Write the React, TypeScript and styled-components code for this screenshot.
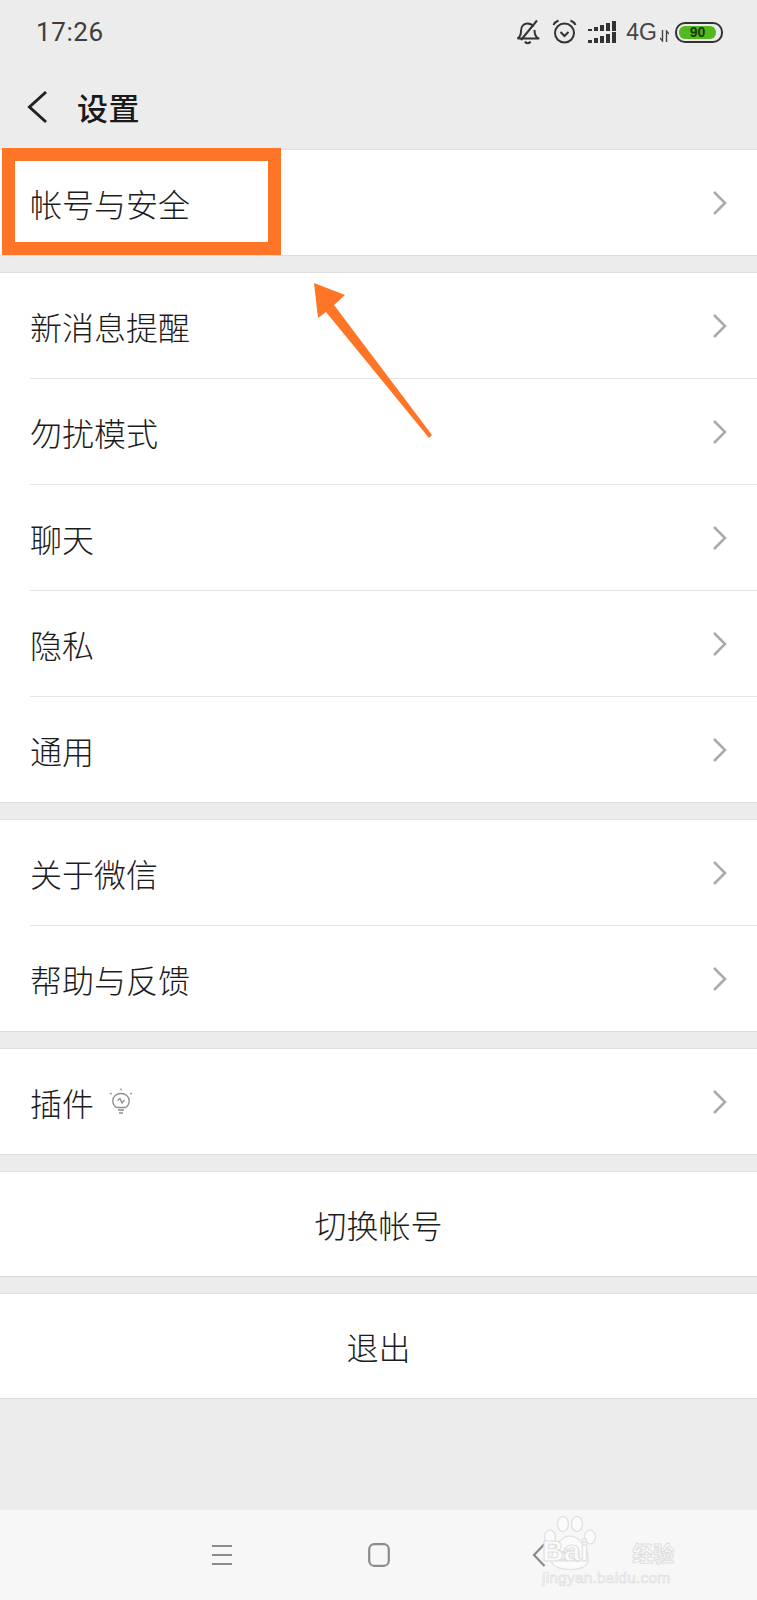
import styled, { createGlobalStyle } from "styled-components";

const GlobalStyle = createGlobalStyle`
  html, body {
    margin: 0;
    padding: 0;
    background: #ececec;
  }
  * {
    box-sizing: border-box;
  }
`;

const Page = styled.div`
  position: relative;
  width: 757px;
  height: 1600px;
  display: flex;
  flex-direction: column;
  background: #ececec;
  font-family: "Noto Sans CJK SC", "Noto Sans", sans-serif;
  color: #1c1c1c;
  overflow: hidden;
`;

const StatusBar = styled.div`
  height: 64px;
  padding: 0 34px 0 36px;
  display: flex;
  align-items: center;
  justify-content: space-between;
`;

const Clock = styled.span`
  font-family: "Roboto", "Liberation Sans", sans-serif;
  font-size: 26px;
  letter-spacing: 0.6px;
  color: #3d3d3d;
`;

const StatusIcons = styled.div`
  display: flex;
  align-items: center;
`;

const NetworkLabel = styled.span`
  margin-left: 9px;
  font-family: "Liberation Sans", sans-serif;
  font-size: 23px;
  color: #444;
`;

const Battery = styled.div`
  width: 48px;
  height: 21px;
  margin-left: 6px;
  padding: 2px;
  border: 2px solid #333;
  border-radius: 10px;
  display: flex;
`;

const BatteryFill = styled.div`
  flex: 1;
  margin-right: 3px;
  border-radius: 6px;
  background: #54b81f;
  color: #173c05;
  font-family: "Liberation Sans", sans-serif;
  font-size: 14px;
  font-weight: 700;
  line-height: 13px;
  text-align: center;
`;

const Header = styled.div`
  height: 85px;
  padding: 0 0 0 26px;
  display: flex;
  align-items: center;
  gap: 27px;
`;

const Title = styled.h1`
  margin: 0;
  font-size: 31px;
  font-weight: 500;
  line-height: 1;
  letter-spacing: 0.5px;
  color: #1a1a1a;
`;

const Group = styled.div`
  margin-bottom: 16px;
  background: #fff;
  border-top: 1px solid #e0e0e0;
  border-bottom: 1px solid #dcdcdc;
`;

const Row = styled.div`
  height: 105px;
  margin-left: 30px;
  padding-right: 29px;
  display: flex;
  align-items: center;
  justify-content: space-between;
  & + & {
    border-top: 1px solid #e4e4e4;
    height: 106px;
  }
`;

const Label = styled.div`
  display: flex;
  align-items: center;
  gap: 15px;
  font-size: 32px;
  font-weight: 300;
  line-height: 1;
`;

const ActionRow = styled.div`
  height: 104px;
  display: flex;
  align-items: center;
  justify-content: center;
  font-size: 32px;
  font-weight: 300;
  line-height: 1;
`;

const BottomNav = styled.div`
  position: absolute;
  left: 0;
  right: 0;
  bottom: 0;
  height: 90px;
  background: #f7f7f7;
  display: flex;
  align-items: center;
`;

const NavSlot = styled.div<{ $width: number }>`
  width: ${(p) => p.$width}px;
  display: flex;
  justify-content: flex-end;
`;

const HighlightBox = styled.div`
  position: absolute;
  left: 2px;
  top: 148px;
  width: 279px;
  height: 107px;
  border: 13px solid #ff7527;
`;

const ArrowMark = styled.svg`
  position: absolute;
  left: 310px;
  top: 280px;
`;

const Watermark = styled.div`
  position: absolute;
  left: 542px;
  top: 1516px;
  width: 180px;
  height: 76px;
  color: #fbfbfb;
  font-family: "Liberation Sans", sans-serif;
  -webkit-text-stroke: 1px #dedede;
`;

const Brand = styled.div`
  position: absolute;
  left: 0;
  top: 20px;
  display: flex;
  align-items: baseline;
  font-size: 30px;
  font-weight: 700;
  line-height: 1;
`;

const BrandTail = styled.span`
  margin-left: 21px;
  font-size: 20px;
`;

const BrandWord = styled.span`
  margin-left: 6px;
  font-family: "Noto Sans CJK SC", sans-serif;
  font-size: 21px;
`;

const BrandUrl = styled.div`
  position: absolute;
  left: 0;
  top: 54px;
  font-size: 15.5px;
  letter-spacing: 0.2px;
  line-height: 1;
  -webkit-text-stroke: 0.7px #dedede;
  white-space: nowrap;
`;

const PawMark = styled.svg`
  position: absolute;
  left: 40px;
  top: 0;
`;

function Chevron() {
  return (
    <svg width="16" height="26" viewBox="0 0 16 26">
      <path d="M2 2 L13 13 L2 24" fill="none" stroke="#ababab" strokeWidth="2.6" />
    </svg>
  );
}

function BellMuted() {
  return (
    <svg width="24" height="26" viewBox="0 0 24 26" fill="none" stroke="#333" strokeWidth="2" strokeLinejoin="round">
      <path d="M1.5 19.5 C4 18 5 16 5 12 C5 7 8 4.5 11.5 4.5 C14 4.5 16 5.500 17.500 7.500" />
      <path d="M18.500 11 C18.500 15 19.500 18 22.500 19.500 L1.500 19.500" />
      <path d="M9 22.500 C10 24.800 13.500 24.800 14.500 22.500" />
      <path d="M5 21 L21 1.500" />
    </svg>
  );
}

function AlarmClock() {
  return (
    <svg width="25" height="26" viewBox="0 0 25 26" fill="none" stroke="#333" strokeWidth="2" style={{ marginLeft: 12 }}>
      <circle cx="12.5" cy="14" r="9.500" />
      <path d="M8.500 13 L12.500 17 L16.500 13" />
      <path d="M1.500 6 C2.500 3.500 4 2.500 6.500 1.500" />
      <path d="M23.500 6 C22.500 3.500 21 2.500 18.500 1.500" />
    </svg>
  );
}

function SignalBars() {
  const columns = [0, 6, 12, 18, 24];
  return (
    <svg width="29" height="22" viewBox="0 0 29 22" fill="#333" style={{ marginLeft: 11 }}>
      {columns.map((x, i) => (
        <g key={x}>
          <rect x={x} y={8 - i * 2} width="4" height={i * 2 + 2} />
          <rect x={x} y={19 - i * 2} width="4" height={i * 2 + 3} />
        </g>
      ))}
    </svg>
  );
}

function DataArrows() {
  return (
    <svg width="9" height="12" viewBox="0 0 9 12" fill="none" stroke="#444" strokeWidth="1.400" style={{ marginLeft: 3, marginTop: 8 }}>
      <path d="M2.500 0 V11 L0 8" />
      <path d="M6.500 12 V1 L9 4" />
    </svg>
  );
}

function BackArrow() {
  return (
    <svg width="24" height="34" viewBox="0 0 24 34">
      <path d="M20 2 L3.500 17 L20 32" fill="none" stroke="#222" strokeWidth="3" />
    </svg>
  );
}

function PluginBulb() {
  return (
    <svg width="24" height="28" viewBox="0 0 24 28" fill="none" stroke="#8e8e8e" strokeWidth="1.300">
      <path d="M7.500 19.500 C5 18 3.800 15.500 3.800 13 C3.800 8.500 7.500 5.500 12 5.500 C16.500 5.500 20.200 8.500 20.200 13 C20.200 15.500 19 18 16.500 19.500 Z" />
      <path d="M8.500 12.500 L11 10.500 L13 15 L15.500 12" />
      <path d="M9 22 H15 M10 25 H14" />
      <path d="M12 0.500 V2.500 M1 5 L2.800 6.200 M23 5 L21.200 6.200" />
    </svg>
  );
}

function NavMenu() {
  return (
    <svg width="22" height="22" viewBox="0 0 22 22" stroke="#8b8b8b" strokeWidth="2.200">
      <path d="M1 2 H21 M1 11 H21 M1 20 H21" />
    </svg>
  );
}

function NavHome() {
  return (
    <svg width="22" height="24" viewBox="0 0 22 24">
      <rect x="1.200" y="1.200" width="19.600" height="21.600" rx="5" fill="none" stroke="#8b8b8b" strokeWidth="2.200" />
    </svg>
  );
}

function NavBack() {
  return (
    <svg width="14" height="24" viewBox="0 0 14 24">
      <path d="M12.500 1 L2 12 L12.500 23" fill="none" stroke="#8b8b8b" strokeWidth="2.200" />
    </svg>
  );
}

function Paw() {
  return (
    <svg width="60" height="60" viewBox="0 0 60 60" fill="#fbfbfb" stroke="#dedede" strokeWidth="1.200">
      <ellipse cx="8" cy="21" rx="5.500" ry="7" />
      <ellipse cx="21" cy="8" rx="5.500" ry="7.500" />
      <ellipse cx="35" cy="8" rx="5.500" ry="7.500" />
      <ellipse cx="48" cy="21" rx="5.500" ry="7" />
      <path d="M28 20 C38 20 48 36 46 46 C44 56 12 56 10 46 C8 36 18 20 28 20 Z" />
      <text x="15" y="45" fontSize="19" fontWeight="700" fontFamily="Liberation Sans, sans-serif">du</text>
    </svg>
  );
}

const settingGroups = [
  ["帐号与安全"],
  ["新消息提醒", "勿扰模式", "聊天", "隐私", "通用"],
  ["关于微信", "帮助与反馈"],
];

export default function App() {
  return (
    <Page>
      <GlobalStyle />
      <StatusBar>
        <Clock>17:26</Clock>
        <StatusIcons>
          <BellMuted />
          <AlarmClock />
          <SignalBars />
          <NetworkLabel>4G</NetworkLabel>
          <DataArrows />
          <Battery>
            <BatteryFill>90</BatteryFill>
          </Battery>
        </StatusIcons>
      </StatusBar>
      <Header>
        <BackArrow />
        <Title>设置</Title>
      </Header>

      {settingGroups.map((items) => (
        <Group key={items[0]}>
          {items.map((item) => (
            <Row key={item}>
              <Label>{item}</Label>
              <Chevron />
            </Row>
          ))}
        </Group>
      ))}

      <Group>
        <Row>
          <Label>
            插件
            <PluginBulb />
          </Label>
          <Chevron />
        </Row>
      </Group>
      <Group>
        <ActionRow>切换帐号</ActionRow>
      </Group>
      <Group>
        <ActionRow>退出</ActionRow>
      </Group>

      <BottomNav>
        <NavSlot $width={233}>
          <NavMenu />
        </NavSlot>
        <NavSlot $width={157}>
          <NavHome />
        </NavSlot>
        <NavSlot $width={156}>
          <NavBack />
        </NavSlot>
      </BottomNav>

      <Watermark>
        <Brand>
          Bai
          <BrandTail>&nbsp;&nbsp;&nbsp;</BrandTail>
          <BrandWord>经验</BrandWord>
        </Brand>
        <PawMark as={Paw} />
        <BrandUrl>jingyan.baidu.com</BrandUrl>
      </Watermark>

      <HighlightBox />
      <ArrowMark width="125" height="162" viewBox="0 0 125 162">
        <path d="M4 3 L35 15 L24 25 L122 155 L119 158 L16 32 L8 38 Z" fill="#ff7527" />
      </ArrowMark>
    </Page>
  );
}
